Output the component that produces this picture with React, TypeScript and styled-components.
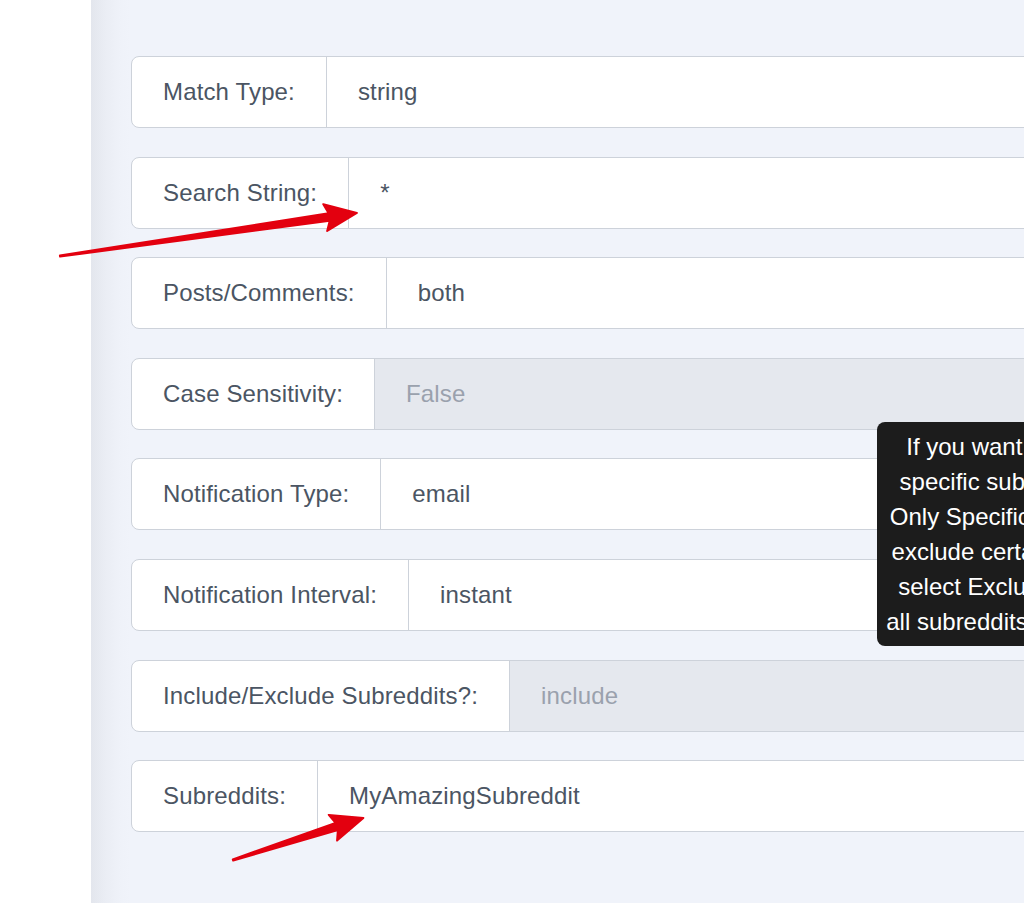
import styled, { createGlobalStyle } from "styled-components";

const GlobalStyle = createGlobalStyle`
  html, body {
    margin: 0;
    padding: 0;
    background: #ffffff;
    overflow: hidden;
  }
  body {
    font-family: "Liberation Sans", Arial, sans-serif;
  }
`;

const Page = styled.div`
  position: relative;
  display: flex;
  width: 1024px;
  height: 903px;
  overflow: hidden;
`;

const Gutter = styled.div`
  width: 91px;
  flex-shrink: 0;
  background: #ffffff;
`;

const Panel = styled.main`
  position: relative;
  flex: 1;
  padding: 56px 0 0 40px;
  background: linear-gradient(
    to right,
    #e3e6ed 0px,
    #eaedf4 14px,
    #eff2f9 30px,
    #f0f3fa 40px
  );
`;

const Form = styled.div`
  display: flex;
  flex-direction: column;
  gap: 28.6px;
`;

const Row = styled.div`
  display: flex;
  width: 1100px;
  height: 72px;
  box-sizing: border-box;
  border: 1px solid #cdd2da;
  border-radius: 8px;
  overflow: hidden;
  background: #ffffff;
`;

const Label = styled.div`
  display: flex;
  align-items: center;
  padding: 0 31px;
  border-right: 1px solid #cdd2da;
  font-size: 24px;
  letter-spacing: 0.15px;
  color: #4b5563;
  white-space: nowrap;
`;

const Value = styled.div<{ $disabled?: boolean }>`
  flex: 1;
  display: flex;
  align-items: center;
  padding: 0 31px;
  font-size: 24px;
  letter-spacing: 0.15px;
  white-space: nowrap;
  color: ${(p) => (p.$disabled ? "#9aa1ad" : "#4b5563")};
  background: ${(p) => (p.$disabled ? "#e5e8ee" : "#ffffff")};
`;

const Tooltip = styled.div`
  position: absolute;
  left: 786px;
  top: 422px;
  width: 288px;
  box-sizing: border-box;
  padding: 7px;
  border-radius: 8px;
  background: #1c1c1c;
  color: #ffffff;
  font-size: 24px;
  line-height: 35px;
  text-align: center;
  white-space: nowrap;
`;

const Annotations = styled.svg`
  position: absolute;
  left: 0;
  top: 0;
  pointer-events: none;
`;

const fields: { label: string; value: string; disabled?: boolean }[] = [
  { label: "Match Type:", value: "string" },
  { label: "Search String:", value: "*" },
  { label: "Posts/Comments:", value: "both" },
  { label: "Case Sensitivity:", value: "False", disabled: true },
  { label: "Notification Type:", value: "email" },
  { label: "Notification Interval:", value: "instant" },
  { label: "Include/Exclude Subreddits?:", value: "include", disabled: true },
  { label: "Subreddits:", value: "MyAmazingSubreddit" },
];

const tipLines = [
  "If you want to monitor",
  "specific subreddits, set",
  "Only Specific. To instead",
  "exclude certain ones, so",
  "select Exclude. Include",
  "all subreddits if left blank.",
];

function Arrow({ x, y, length, angle }: { x: number; y: number; length: number; angle: number }) {
  const h = length - 28;
  const pts = [
    [0, -0.6],
    [h, -3.8],
    [h - 4, -13.5],
    [length, 0],
    [h - 4, 13.5],
    [h, 3.8],
    [0, 0.6],
  ]
    .map((p) => p.join(","))
    .join(" ");
  return (
    <g transform={`translate(${x} ${y}) rotate(${angle})`}>
      <polygon
        points={pts}
        fill="#e3000f"
        stroke="#e3000f"
        strokeWidth="2"
        strokeLinejoin="round"
      />
    </g>
  );
}

export default function App() {
  return (
    <>
      <GlobalStyle />
      <Page>
        <Gutter />
        <Panel>
          <Form>
            {fields.map((f) => (
              <Row key={f.label}>
                <Label>{f.label}</Label>
                <Value $disabled={f.disabled}>{f.value}</Value>
              </Row>
            ))}
          </Form>
          <Tooltip>
            {tipLines.map((l) => (
              <div key={l}>{l}</div>
            ))}
          </Tooltip>
        </Panel>
        <Annotations width="1024" height="903" viewBox="0 0 1024 903">
          <Arrow x={60} y={256} length={300} angle={-8.24} />
          <Arrow x={233} y={860} length={137} angle={-17.9} />
        </Annotations>
      </Page>
    </>
  );
}
